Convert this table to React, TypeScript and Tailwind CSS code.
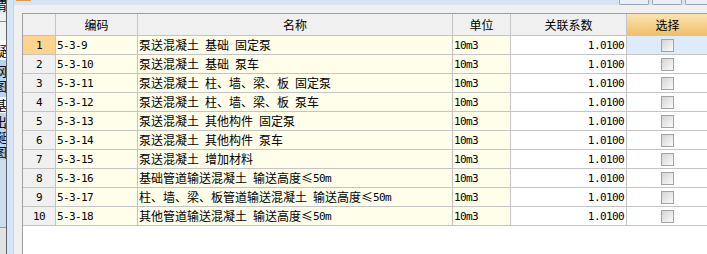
import React from "react";

const rows: [string, string][] = [
  ["5-3-9", "泵送混凝土 基础 固定泵"],
  ["5-3-10", "泵送混凝土 基础 泵车"],
  ["5-3-11", "泵送混凝土 柱、墙、梁、板 固定泵"],
  ["5-3-12", "泵送混凝土 柱、墙、梁、板 泵车"],
  ["5-3-13", "泵送混凝土 其他构件 固定泵"],
  ["5-3-14", "泵送混凝土 其他构件 泵车"],
  ["5-3-15", "泵送混凝土 增加材料"],
  ["5-3-16", "基础管道输送混凝土 输送高度≤50m"],
  ["5-3-17", "柱、墙、梁、板管道输送混凝土 输送高度≤50m"],
  ["5-3-18", "其他管道输送混凝土 输送高度≤50m"],
];

function T({ s }: { s: string }) {
  const parts = s.match(/[\x20-\x7e]+|[^\x20-\x7e]+/g) || [];
  return (
    <>
      {parts.map((p, i) =>
        /^[\x20-\x7e]/.test(p) ? (
          <span
            key={i}
            className="font-['DejaVu_Sans_Mono',monospace] text-[11px] tracking-[-0.6px] whitespace-pre"
          >
            {p}
          </span>
        ) : (
          <span key={i}>{p}</span>
        )
      )}
    </>
  );
}

function Checkbox() {
  return (
    <div className="w-[13px] h-[13px] border border-[#a3a3a3] bg-linear-to-br from-[#d4d4d4] to-[#fbfbfb]" />
  );
}

function SideChar({ c }: { c: string }) {
  return <span className="block -ml-[6px] h-[15px] leading-[15px] text-[13px]">{c}</span>;
}

export default function App() {
  return (
    <div className="w-[707px] h-[254px] overflow-hidden flex bg-[#d6e4f3] font-['Noto_Sans_CJK_SC',sans-serif] text-[12px] text-black leading-none">
      {/* cut-off left panel */}
      <div className="w-[7px] shrink-0 flex flex-col border-r border-[#5a6270] overflow-hidden">
        <div className="h-[14px] bg-[#e4ecf5] overflow-hidden">
          <span className="block -ml-[6px] -mt-[3px] h-[15px] leading-[15px] text-[13px]">渭</span>
        </div>
        <div className="h-[8px] bg-[#f0f0f0] border-b border-[#8a8a8a]" />
        <div className="h-[18px] bg-[#f0f0f0]" />
        <div className="h-[20px] bg-white overflow-hidden pt-[3px]">
          <SideChar c="疑" />
        </div>
        <div className="h-[37px] bg-[#b7d4f1] overflow-hidden pt-[3px]">
          <SideChar c="网" />
          <SideChar c="图" />
        </div>
        <div className="h-[16px] bg-white overflow-hidden">
          <SideChar c="基" />
        </div>
        <div className="h-[47px] bg-[#b7d4f1] overflow-hidden pt-[1px]">
          <SideChar c="出" />
          <SideChar c="诞" />
          <SideChar c="图" />
        </div>
        <div className="h-[67px] bg-[#cfdcea]" />
        <div className="flex-1 bg-[#e2e2e2] border-t border-[#9a9a9a]" />
      </div>
      {/* blue gap */}
      <div className="w-[7px] shrink-0 bg-[#d6e4f3] border-r border-[#c9d3de]" />
      {/* main */}
      <div className="flex-1 flex flex-col min-w-0">
        <div className="h-[5px] shrink-0 bg-[#d6e4f3] flex items-start">
          <div className="ml-[2px] w-[15px] h-[1px] bg-[#e39a45]" />
          <div className="ml-auto flex gap-[3px]">
            <div className="w-[30px] h-[5px] border border-t-0 border-[#9aa6b6] rounded-b-[2px] bg-[#eaeff5]" />
            <div className="w-[30px] h-[5px] border border-t-0 border-[#9aa6b6] rounded-b-[2px] bg-[#eaeff5]" />
            <div className="w-[22px] h-[5px] border border-t-0 border-r-0 border-[#9aa6b6] rounded-bl-[2px] bg-[#eaeff5]" />
          </div>
        </div>
        <div className="flex-1 bg-[#f0f0f0] pl-[8px] pt-[8px] flex flex-col min-h-0">
          <div className="flex-1 bg-white border-l border-t border-[#a0a0a0] overflow-hidden">
            {/* header */}
            <div className="flex h-[22px] w-[686px]">
              <div className="w-[33px] shrink-0 bg-[#f0f0f0] border-r border-b border-[#c4c4c4]" />
              <div className="w-[82px] shrink-0 bg-[#f0f0f0] border-r border-b border-[#c4c4c4] flex items-center justify-center">
                编码
              </div>
              <div className="w-[315px] shrink-0 bg-[#f0f0f0] border-r border-b border-[#c4c4c4] flex items-center justify-center">
                名称
              </div>
              <div className="w-[58px] shrink-0 bg-[#f0f0f0] border-r border-b border-[#c4c4c4] flex items-center justify-center">
                单位
              </div>
              <div className="w-[116px] shrink-0 bg-[#f0f0f0] border-r border-b border-[#c4c4c4] flex items-center justify-center">
                关联系数
              </div>
              <div className="w-[82px] shrink-0 bg-linear-to-b from-[#fbe4b3] to-[#f1bf66] border-r border-b border-[#c4c4c4] flex items-center justify-center">
                选择
              </div>
            </div>
            {rows.map(([code, name], i) => (
              <div key={code} className="flex h-[19px] w-[686px]">
                <div
                  className={`w-[33px] shrink-0 border-r border-b border-[#c4c4c4] flex items-center justify-center ${
                    i === 0 ? "bg-[#fdd390]" : "bg-[#f0f0f0]"
                  }`}
                >
                  <T s={String(i + 1)} />
                </div>
                <div className="w-[82px] shrink-0 bg-[#fefeeb] border-r border-b border-[#c4c4c4] flex items-center pl-[1px]">
                  <T s={code} />
                </div>
                <div className="w-[315px] shrink-0 bg-[#fefeeb] border-r border-b border-[#c4c4c4] flex items-center pl-[1px] whitespace-nowrap">
                  <T s={name} />
                </div>
                <div className="w-[58px] shrink-0 bg-[#fefeeb] border-r border-b border-[#c4c4c4] flex items-center pl-[1px]">
                  <T s="10m3" />
                </div>
                <div className="w-[116px] shrink-0 bg-white border-r border-b border-[#c4c4c4] flex items-center justify-end pr-[2px]">
                  <T s="1.0100" />
                </div>
                <div
                  className={`w-[82px] shrink-0 border-r border-b border-[#c4c4c4] flex items-center justify-center ${
                    i === 0 ? "bg-[#deebfa]" : "bg-white"
                  }`}
                >
                  <Checkbox />
                </div>
              </div>
            ))}
          </div>
        </div>
      </div>
    </div>
  );
}
